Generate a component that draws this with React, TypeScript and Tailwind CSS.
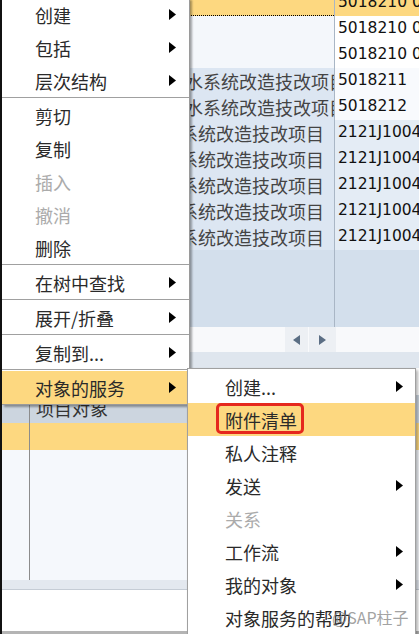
const cjk = "font-['Noto_Sans_CJK_SC',sans-serif]";
const num = "font-['DejaVu_Sans',sans-serif]";

function Arrow({ className = '' }: { className?: string }) {
  return (
    <svg width="7" height="11" viewBox="0 0 7 11" className={className}>
      <polygon points="0,0 7,5.5 0,11" fill="#000" />
    </svg>
  );
}

type Item = { label?: string; arrow?: boolean; disabled?: boolean; active?: boolean; sep?: boolean };

const mainItems: Item[] = [
  { label: '创建', arrow: true },
  { label: '包括', arrow: true },
  { label: '层次结构', arrow: true },
  { sep: true },
  { label: '剪切' },
  { label: '复制' },
  { label: '插入', disabled: true },
  { label: '撤消', disabled: true },
  { label: '删除' },
  { sep: true },
  { label: '在树中查找', arrow: true },
  { sep: true },
  { label: '展开/折叠', arrow: true },
  { sep: true },
  { label: '复制到...', arrow: true },
  { sep: true },
  { label: '对象的服务', arrow: true, active: true },
];

const subItems: Item[] = [
  { label: '创建...', arrow: true },
  { label: '附件清单', active: true },
  { label: '私人注释' },
  { label: '发送', arrow: true },
  { label: '关系', disabled: true },
  { label: '工作流', arrow: true },
  { label: '我的对象', arrow: true },
  { label: '对象服务的帮助' },
];

const rows = [
  { name: '', no: '5018210 0001', left: 'bg-[#f4f7fb]', right: 'bg-white', indent: 'pl-[11px]' },
  { name: '', no: '5018210 0002', left: 'bg-[#f4f7fb]', right: 'bg-white', indent: 'pl-[11px]' },
  { name: '水系统改造技改项目1', no: '5018211', left: 'bg-[#dce6f2]', right: 'bg-[#f8fafd]', indent: 'pl-[11px]' },
  { name: '水系统改造技改项目2', no: '5018212', left: 'bg-[#dce6f2]', right: 'bg-[#f8fafd]', indent: 'pl-[11px]' },
  { name: '系统改造技改项目', no: '2121J100401', left: 'bg-[#dce6f2]', right: 'bg-[#e4ecf5]', indent: 'pl-[6px]' },
  { name: '系统改造技改项目', no: '2121J100402', left: 'bg-[#dce6f2]', right: 'bg-[#e4ecf5]', indent: 'pl-[6px]' },
  { name: '系统改造技改项目', no: '2121J100403', left: 'bg-[#dce6f2]', right: 'bg-[#e4ecf5]', indent: 'pl-[6px]' },
  { name: '系统改造技改项目', no: '2121J100404', left: 'bg-[#dce6f2]', right: 'bg-[#e4ecf5]', indent: 'pl-[6px]' },
  { name: '系统改造技改项目', no: '2121J100405', left: 'bg-[#dce6f2]', right: 'bg-[#e4ecf5]', indent: 'pl-[6px]' },
];

function TopTable() {
  return (
    <div className="h-[368px] flex flex-col overflow-hidden">
      {/* focused row, mostly scrolled out */}
      <div className="grid grid-cols-[332px_1fr] h-[26px] -mt-[10px] shrink-0 bg-[#fdd880]">
        <div className="border-b border-dotted border-black" />
        <div className={`border-l border-[#a9b6c5] pl-[3px] flex items-center text-[15.5px] text-[#111] whitespace-nowrap overflow-hidden ${num}`}>
          5018210 0000
        </div>
      </div>

      {rows.map((r, i) => (
        <div key={i} className="grid grid-cols-[332px_1fr] h-[26px] shrink-0">
          <div className={`${r.left} flex items-center overflow-hidden`}>
            <div className="w-[172px] shrink-0" />
            <span className={`${r.indent} whitespace-nowrap text-[18px] leading-none text-[#444] ${cjk}`}>{r.name}</span>
          </div>
          <div className={`${r.right} border-l border-[#a9b6c5] pl-[3px] flex items-center overflow-hidden whitespace-nowrap text-[15.5px] text-[#111] ${num}`}>
            {r.no}
          </div>
        </div>
      ))}

      <div className="grid grid-cols-[332px_1fr] flex-1 bg-[#d3dfec]">
        <div />
        <div className="border-l border-[#a9b6c5]" />
      </div>

      {/* horizontal scroll */}
      <div className="h-[25px] shrink-0 flex bg-[#f8f9fb]">
        <div className="w-[283px]" />
        <div className="w-[23px] bg-[#edf0f4] flex items-center justify-center">
          <svg width="7" height="10" viewBox="0 0 7 10"><polygon points="7,0 0,5 7,10" fill="#5b6e84" /></svg>
        </div>
        <div className="w-[28px] bg-[#edf0f4] border-l border-[#f9fafc] flex items-center justify-center">
          <svg width="7" height="10" viewBox="0 0 7 10"><polygon points="0,0 7,5 0,10" fill="#5b6e84" /></svg>
        </div>
      </div>
      <div className="h-[16px] shrink-0 bg-[#dfe6ee]" />
    </div>
  );
}

function BottomPanel() {
  return (
    <div className="flex-1 flex flex-col">
      <div className="h-[27px] bg-white" />
      <div className="h-[28px] flex bg-[#ccd5df]">
        <div className="w-[28px] border-r border-[#8c8c8c]" />
        <span className={`pl-[6px] pt-[4px] text-[18px] leading-none text-[#333] ${cjk}`}>项目对象</span>
      </div>
      <div className="h-[27px] flex bg-[#fdd880]">
        <div className="w-[28px] border-r border-[#8c8c8c]" />
      </div>
      <div className="h-[130px] flex bg-[#f5f8fc]">
        <div className="w-[28px] border-r border-[#8c8c8c]" />
      </div>
      <div className="h-[10px] bg-[#e3e8ef] border-b border-[#c5ccd5]" />
      <div className="h-[41px] bg-white" />
      <div className="h-[3px] bg-[#b4b4b4]" />
    </div>
  );
}

function MenuRow({ item, textPad, arrowPad, children }: { item: Item; textPad: string; arrowPad: string; children?: React.ReactNode }) {
  if (item.sep) {
    return <div className="h-[2px] border-t border-[#a0a0a0] bg-white" />;
  }
  return (
    <div
      className={`relative h-[33px] flex items-center justify-between ${textPad} ${arrowPad} ${
        item.active ? 'bg-[#fdd880]' : ''
      }`}
    >
      <span
        className={`text-[18px] leading-none whitespace-nowrap ${cjk} ${
          item.disabled ? 'text-[#ababab]' : 'text-[#2a2a2a]'
        }`}
      >
        {item.label}
      </span>
      {item.arrow && <Arrow />}
      {children}
    </div>
  );
}

export default function App() {
  return (
    <div className="relative w-[419px] h-[634px] overflow-hidden bg-white border-l-2 border-[#111]">
      <div className="flex flex-col h-full">
        <TopTable />
        <BottomPanel />
      </div>

      {/* context menu */}
      <div className="absolute left-0 top-[-2px] w-[188px] bg-white border-r border-b border-[#9a9a9a] shadow-[2px_2px_2px_rgba(0,0,0,0.35)]">
        {mainItems.map((it, i) => (
          <MenuRow key={i} item={it} textPad="pl-[33px]" arrowPad="pr-[13px]" />
        ))}
      </div>

      {/* submenu */}
      <div className="absolute left-[185px] top-[368px] w-[229px] h-[280px] bg-white border border-[#a0a0a0] pt-[1px] shadow-[2px_2px_3px_rgba(0,0,0,0.3)]">
        {subItems.map((it, i) => (
          <MenuRow key={i} item={it} textPad="pl-[37px]" arrowPad="pr-[12px]">
            {it.label === '附件清单' && (
              <div className="absolute left-[28px] top-0 w-[88px] h-[31px] border-[3px] border-[#e5281d] rounded-[5px]" />
            )}
            {it.label === '对象服务的帮助' && (
              <span className={`absolute left-[144px] top-[8px] text-[16px] leading-none text-[#8a8a8a]/80 whitespace-nowrap ${cjk}`}>
                @SAP柱子
              </span>
            )}
          </MenuRow>
        ))}
      </div>
    </div>
  );
}
